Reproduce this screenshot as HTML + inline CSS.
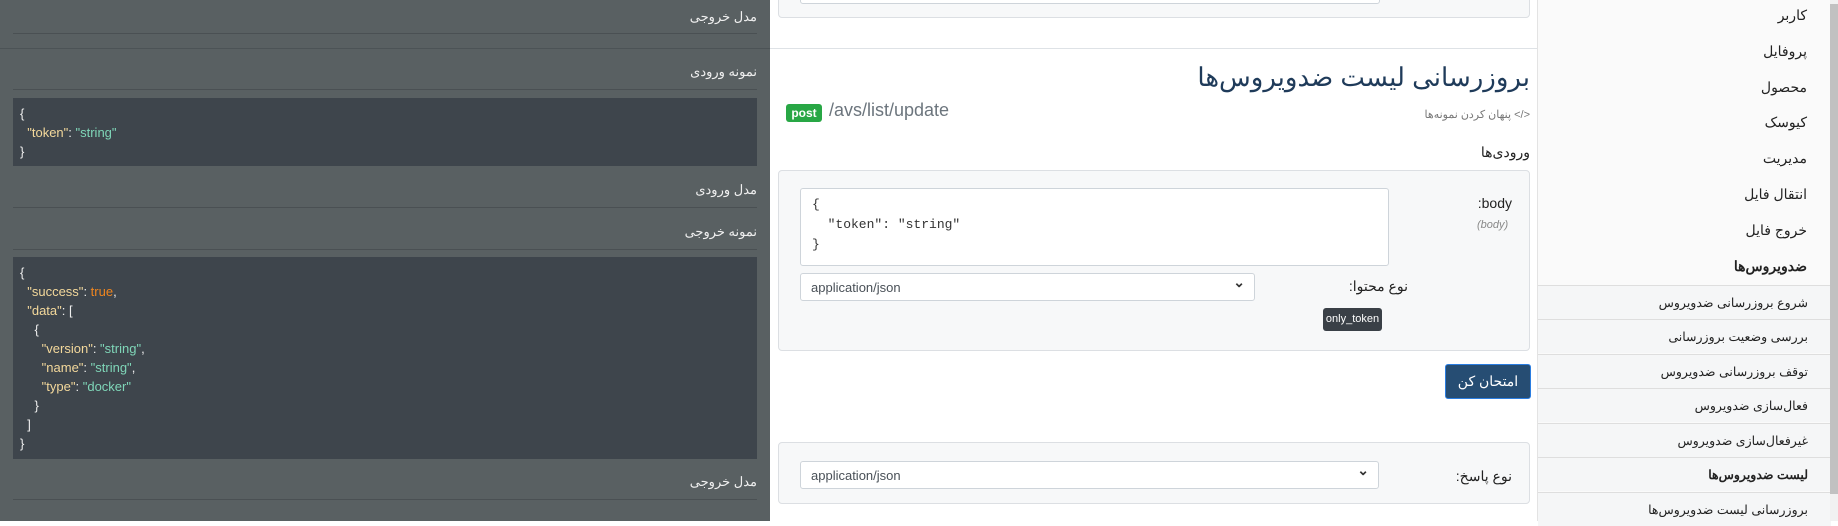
<!DOCTYPE html>
<html><head><meta charset="utf-8"><style>
*{box-sizing:border-box;margin:0;padding:0}
body{width:1838px;height:521px;overflow:hidden;position:relative;background:#fff;font-family:"Liberation Sans","Noto Sans CJK SC",sans-serif}
.a{position:absolute}
.l{background:#596062;left:0;top:0;width:770px;height:521px}
.lt{color:#f0f0f0;font-size:13px;right:13px;text-align:right;direction:rtl}
.ln{left:13px;width:744px;height:1px;background:#4a5053}
.code{left:13px;width:744px;background:#3e454c;color:#eee;font-size:13px;line-height:19px;padding:6px 7px;white-space:pre;font-family:"Liberation Sans",sans-serif}
.k{color:#f3d89b}.s{color:#7fd6b8}.t{color:#f0861f}
.card{background:#f7f8f9;border:1px solid #dcdfe3;border-radius:4px}
.sel{background:#fff;border:1px solid #ced4da;border-radius:3px;font-size:13px;color:#495057;padding:6px 10px;height:28px}
.sel:after{content:"⌄";position:absolute;right:9px;top:0px;font-size:14px;font-weight:bold;color:#333}
.rt{direction:rtl;text-align:right}
.sb{left:1537px;top:0;width:293px;height:521px;background:#fafafa;border-left:1px solid #e3e3e3}
.it{position:absolute;right:23px;font-size:14px;color:#222;direction:rtl}
.sub{position:absolute;left:0;width:293px;height:34px;background:#f5f6f7;border-top:1px solid #dedede}
.sub span{position:absolute;right:23px;top:9px;font-size:12.5px;color:#222;direction:rtl}
</style></head><body>
<div class="a l">
<div class="a lt" style="top:9px">مدل خروجی</div>
<div class="a ln" style="top:33px"></div>
<div class="a" style="left:0;top:48px;width:770px;height:1px;background:#4c5356"></div>
<div class="a lt" style="top:64px">نمونه ورودی</div>
<div class="a ln" style="top:89px"></div>
<div class="a code" style="top:98px;height:68px">{
  <span class="k">"token"</span>: <span class="s">"string"</span>
}</div>
<div class="a lt" style="top:182px">مدل ورودی</div>
<div class="a ln" style="top:207px"></div>
<div class="a lt" style="top:224px">نمونه خروجی</div>
<div class="a ln" style="top:249px"></div>
<div class="a code" style="top:257px;height:202px">{
  <span class="k">"success"</span>: <span class="t">true</span>,
  <span class="k">"data"</span>: [
    {
      <span class="k">"version"</span>: <span class="s">"string"</span>,
      <span class="k">"name"</span>: <span class="s">"string"</span>,
      <span class="k">"type"</span>: <span class="s">"docker"</span>
    }
  ]
}</div>
<div class="a lt" style="top:474px">مدل خروجی</div>
<div class="a ln" style="top:499px"></div>
</div>

<div class="a card" style="left:778px;top:-10px;width:752px;height:28px"></div>
<div class="a" style="left:800px;top:-10px;width:580px;height:14px;border:1px solid #ced4da;border-radius:3px;background:#fff"></div>
<div class="a" style="left:770px;top:48px;width:767px;height:1px;background:#dee2e6"></div>
<div class="a rt" style="right:308px;top:62px;font-size:26px;color:#1f3b5a">بروزرسانی لیست ضدویروس‌ها</div>
<div class="a" style="left:786px;top:104px;width:36px;height:18px;background:#28a745;border-radius:3px;color:#fff;font-size:12px;font-weight:bold;text-align:center;line-height:18px">post</div>
<div class="a" style="left:829px;top:100px;font-size:18px;color:#6c757d">/avs/list/update</div>
<div class="a rt" style="right:308px;top:108px;font-size:11px;color:#777">&lt;/&gt; پنهان کردن نمونه‌ها</div>
<div class="a rt" style="right:308px;top:144px;font-size:14px;color:#222">ورودی‌ها</div>
<div class="a card" style="left:778px;top:170px;width:752px;height:181px"></div>
<div class="a" style="left:800px;top:188px;width:589px;height:78px;background:#fff;border:1px solid #ced4da;border-radius:3px;font-family:'Liberation Mono',monospace;font-size:13px;line-height:20px;color:#333;padding:6px 11px;white-space:pre">{
  "token": "string"
}</div>
<div class="a rt" style="right:326px;top:195px;font-size:14px;color:#222">body:</div>
<div class="a" style="left:1477px;top:219px;font-size:11px;color:#888;font-style:italic">(body)</div>
<div class="a rt" style="right:430px;top:278px;font-size:14px;color:#222">نوع محتوا:</div>
<div class="a sel" style="left:800px;top:273px;width:455px">application/json</div>
<div class="a" style="left:1323px;top:308px;width:59px;height:23px;background:#3a4047;border-radius:3px;color:#fff;font-size:11px;text-align:center;line-height:23px">only_token</div>
<div class="a" style="left:1445px;top:364px;width:86px;height:35px;background:#264d73;border:1px solid #2a7de1;border-radius:3px;color:#fff;font-size:14px;text-align:center;line-height:33px;direction:rtl">امتحان کن</div>
<div class="a card" style="left:778px;top:442px;width:752px;height:62px"></div>
<div class="a sel" style="left:800px;top:461px;width:579px">application/json</div>
<div class="a rt" style="right:326px;top:468px;font-size:14px;color:#222">نوع پاسخ:</div>

<div class="a sb">
<div class="it" style="top:7px">کاربر</div>
<div class="it" style="top:43px">پروفایل</div>
<div class="it" style="top:79px">محصول</div>
<div class="it" style="top:114px">کیوسک</div>
<div class="it" style="top:150px">مدیریت</div>
<div class="it" style="top:186px">انتقال فایل</div>
<div class="it" style="top:222px">خروج فایل</div>
<div class="it" style="top:258px;font-weight:bold">ضدویروس‌ها</div>
<div class="sub" style="top:285px"><span>شروع بروزرسانی ضدویروس</span></div>
<div class="sub" style="top:319px"><span>بررسی وضعیت بروزرسانی</span></div>
<div class="sub" style="top:354px"><span>توقف بروزرسانی ضدویروس</span></div>
<div class="sub" style="top:388px"><span>فعال‌سازی ضدویروس</span></div>
<div class="sub" style="top:423px"><span>غیرفعال‌سازی ضدویروس</span></div>
<div class="sub" style="top:457px"><span style="font-weight:bold">لیست ضدویروس‌ها</span></div>
<div class="sub" style="top:492px"><span>بروزرسانی لیست ضدویروس‌ها</span></div>
</div>
<div class="a" style="left:1830px;top:0;width:8px;height:521px;background:#f1f1f1"></div>
<div class="a" style="left:1830px;top:4px;width:8px;height:490px;background:#c1c1c1"></div>
</body></html>
